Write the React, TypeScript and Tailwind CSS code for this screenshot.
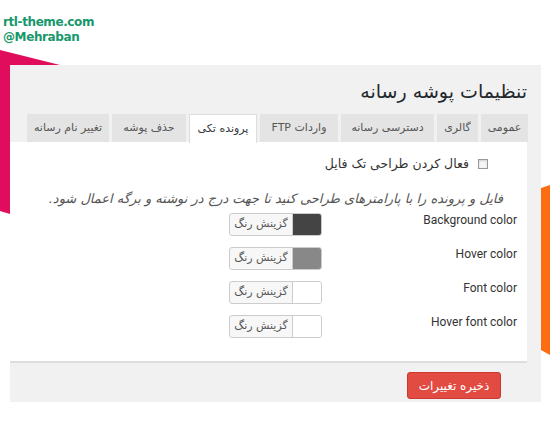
import React from "react";

const fa = { fontFamily: '"DejaVu Sans", "Noto Sans", sans-serif' };

const tabs = [
  { label: "عمومی", w: "w-[47px]" },
  { label: "گالری", w: "w-[41px]" },
  { label: "دسترسی رسانه", w: "w-[93px]" },
  { label: "واردات FTP", w: "w-[78px]" },
  { label: "پرونده تکی", w: "w-[68px]", active: true },
  { label: "حذف پوشه", w: "w-[74px]" },
  { label: "تغییر نام رسانه", w: "w-[82px]" },
];

const rows = [
  { label: "Background color", swatch: "bg-[#444444]" },
  { label: "Hover color", swatch: "bg-[#888888]" },
  { label: "Font color", swatch: "bg-white" },
  { label: "Hover font color", swatch: "bg-white" },
];

export default function App() {
  return (
    <div className="relative w-[550px] h-[425px] bg-white overflow-hidden">
      <svg className="absolute inset-0" width="550" height="425">
        <polygon points="0,50 60,65 60,100 10,214 0,211" fill="#e00d5d" />
        <polygon points="541,188 550,185 550,355 541,350" fill="#fb6d10" />
      </svg>
      <div
        className="relative h-[65px] pt-[15px] pl-[3px] text-[12px] leading-[15px] font-bold text-[#17976b]"
        style={{ fontFamily: '"DejaVu Sans", sans-serif', letterSpacing: "-0.4px" }}
      >
        <div>rtl-theme.com</div>
        <div>@Mehraban</div>
      </div>
      <div dir="rtl" className="relative ml-[10px] w-[531px] bg-[#f1f1f1] pb-[3px]" style={fa}>
        <div className="h-[49px] pr-[14px] pt-[3px] flex items-center text-[19px] text-[#23282d]">
          تنظیمات پوشه رسانه
        </div>
        <div className="flex gap-[3px] pr-[13px] h-[28px] items-stretch">
          {tabs.map((t) => (
            <div
              key={t.label}
              className={`${t.w} flex items-center justify-center text-[11px] whitespace-nowrap ${
                t.active
                  ? "bg-white border border-[#dddddd] border-b-0 text-[#32373c] h-[29px]"
                  : "bg-[#e4e4e4] text-[#555555]"
              }`}
            >
              {t.label}
            </div>
          ))}
        </div>
        <div className="mr-[14px] bg-white h-[221px] border-b-2 border-[#dddddd] pt-[16px]">
          <div className="flex items-center pr-[39px] gap-[9px] h-[12px]">
            <div className="w-[10px] h-[10px] border border-[#999999] bg-[#f5f5f5] shadow-[inset_0_1px_2px_rgba(0,0,0,0.15)]" />
            <div className="text-[12.5px] text-[#333333]">فعال کردن طراحی تک فایل</div>
          </div>
          <div className="pr-[24px] mt-[19px] text-[13px] italic text-[#555555] whitespace-nowrap">
            فایل و پرونده را با پارامترهای طراحی کنید تا جهت درج در نوشته و برگه اعمال شود.
          </div>
          <div className="mt-[4px] flex flex-col gap-[12px]">
            {rows.map((r) => (
              <div key={r.label} className="flex items-start h-[22px]">
                <div
                  className="w-[205px] pr-[10px] text-[12px] text-[#333333] leading-[14px]"
                  style={{ fontFamily: 'Roboto, "Liberation Sans", sans-serif' }}
                >
                  <span dir="ltr">{r.label}</span>
                </div>
                <div className="flex w-[93px] h-[23px] border border-[#cccccc] rounded-[3px] overflow-hidden bg-[#f7f7f7]">
                  <div className={`w-[29px] h-full border-l border-[#cccccc] ${r.swatch}`} />
                  <div className="flex-1 flex items-center justify-center text-[11px] text-[#555555]">
                    گزینش رنگ
                  </div>
                </div>
              </div>
            ))}
          </div>
        </div>
        <div className="pr-[40px] pt-[9px] flex">
          <div className="w-[94px] h-[27px] bg-[#e14b41] border border-[#c9392f] rounded-[3px] flex items-center justify-center text-white text-[12px]">
            ذخیره تغییرات
          </div>
        </div>
      </div>
    </div>
  );
}
